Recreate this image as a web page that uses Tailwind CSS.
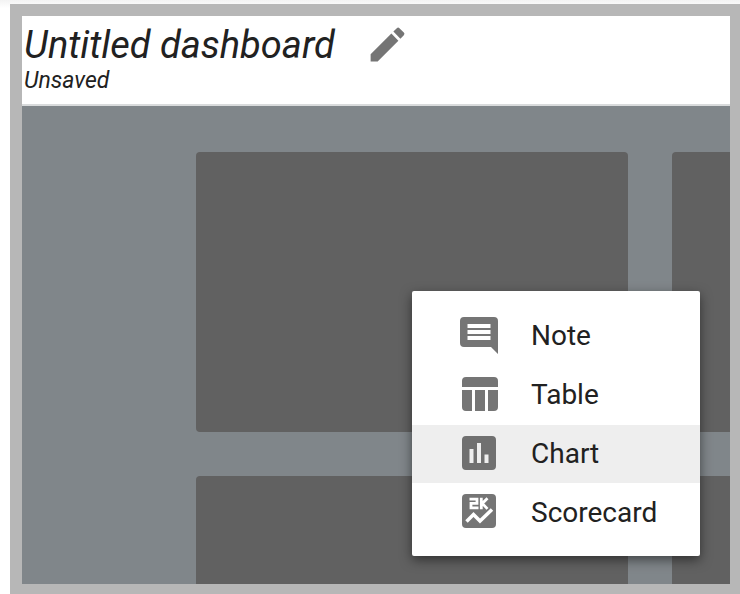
<!DOCTYPE html>
<html lang="en">
<head>
    <meta charset="UTF-8">
    <meta name="viewport" content="width=device-width, initial-scale=1.0">
    <title>Untitled dashboard</title>
    <script src="https://cdn.jsdelivr.net/npm/@tailwindcss/browser@4"></script>
</head>
<body class="bg-white font-[Roboto,sans-serif] text-[#212121]">
    <div class="flex h-screen flex-col bg-linear-to-b from-[#f3f3f3] to-white to-[8px] pt-1 pl-2.5">
        <div class="flex min-h-0 flex-1 flex-col border-t-12 border-r-10 border-b-10 border-l-12 border-[#b7b7b7]">
            <header class="border-b-2 border-[#d9dbdc] bg-white px-0.5 pt-1.5 pb-2.5">
                <div class="flex items-center gap-[30px]">
                    <h1 class="text-[38px] leading-[44px] italic">Untitled dashboard</h1>
                    <button type="button" aria-label="Rename dashboard">
                        <svg class="size-[45px] fill-[#757575]" viewBox="0 0 24 24"><path d="M3 17.250V21h3.750L17.810 9.940l-3.750-3.750L3 17.250zM20.710 7.040a1 1 0 0 0 0-1.410l-2.340-2.340a1 1 0 0 0-1.410 0l-1.830 1.830 3.750 3.750 1.830-1.830z"/></svg>
                    </button>
                </div>
                <p class="text-[23px] leading-[27px] italic">Unsaved</p>
            </header>

            <main class="relative min-h-0 flex-1 overflow-hidden bg-[#80868a]">
                <!-- dashboard tiles -->
                <div class="grid grid-cols-[432px_432px] auto-rows-[280px] gap-11 pt-[46px] pl-[174px]">
                    <div class="rounded-sm bg-[#616161]"></div>
                    <div class="rounded-sm bg-[#616161]"></div>
                    <div class="rounded-sm bg-[#616161]"></div>
                    <div class="rounded-sm bg-[#616161]"></div>
                </div>

                <!-- add menu -->
                <div role="menu" class="absolute right-[30px] bottom-7 flex w-72 flex-col gap-px rounded-xs bg-white pt-4 pb-3.5 text-[28px] shadow-[0_4px_12px_rgba(0,0,0,0.5)]">
                    <button type="button" role="menuitem" class="flex h-[58px] items-center gap-[30px] pl-[45px]">
                        <svg class="size-11 fill-[#757575]" viewBox="0 0 44 44"><path fill-rule="evenodd" d="M7 3h30a4 4 0 0 1 4 4v33l-7-7H7a4 4 0 0 1-4-4V7a4 4 0 0 1 4-4zM10.500 10v4h23v-4zM10.500 16v4h23v-4zM10.500 22v4h23v-4z"/></svg>
                        Note
                    </button>
                    <button type="button" role="menuitem" class="flex h-[58px] items-center gap-[30px] pl-[45px]">
                        <svg class="size-11 fill-[#757575]" viewBox="0 0 44 44"><path d="M9 4h28a4 4 0 0 1 4 4v6H5V8a4 4 0 0 1 4-4zM5 17h10v21H9a4 4 0 0 1-4-4zM18 17h10v21H18zM31 17h10v17a4 4 0 0 1-4 4h-6z"/></svg>
                        Table
                    </button>
                    <button type="button" role="menuitem" class="flex h-[58px] items-center gap-[30px] bg-[#eeeeee] pl-[45px]">
                        <svg class="size-11 fill-[#707070]" viewBox="0 0 44 44"><path fill-rule="evenodd" d="M9 4h26a4 4 0 0 1 4 4v26a4 4 0 0 1-4 4H9a4 4 0 0 1-4-4V8a4 4 0 0 1 4-4zM12.500 17v14h4V17zM20 11v20h4V11zM27.500 22.500V31h4v-8.500z"/></svg>
                        Chart
                    </button>
                    <button type="button" role="menuitem" class="flex h-[58px] items-center gap-[30px] pl-[45px]">
                        <svg class="size-11" viewBox="0 0 44 44" fill="none" stroke="#fff">
                            <rect x="5" y="3" width="34" height="34" rx="4" fill="#757575" stroke="none"/>
                            <path stroke-width="2.800" d="M12.500 8.200h7.500v4.200h-6v4.500h7.500M24.300 6.800v11.500M30.500 7.200l-5.200 5.200 5.200 5.500"/>
                            <path stroke-width="3.500" d="M9.500 30.500l7-7 6.500 6.500L35 18.500"/>
                        </svg>
                        Scorecard
                    </button>
                </div>
            </main>
        </div>
    </div>
</body>
</html>
